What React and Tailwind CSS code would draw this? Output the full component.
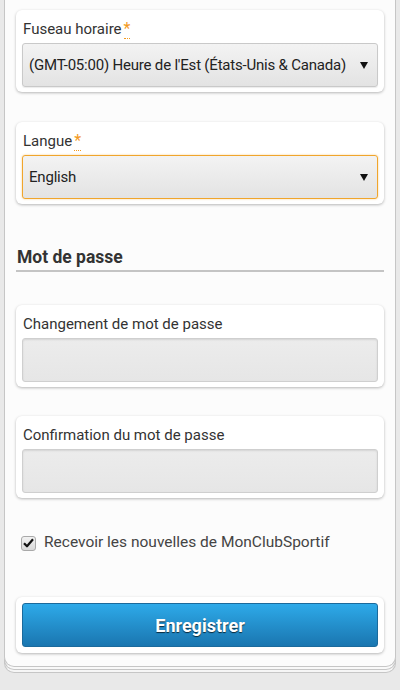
import React from "react";

function Required() {
  return (
    <abbr
      title="requis"
      className="ml-[2px] text-[16px] text-[#f39a1e] no-underline border-b border-dotted border-[#f39a1e] leading-none"
    >
      *
    </abbr>
  );
}

function Caret() {
  return (
    <svg width="8" height="7" viewBox="0 0 8 7" className="shrink-0">
      <path d="M0 0 H8 L4 7 Z" fill="#111" />
    </svg>
  );
}

function Card({ children }) {
  return (
    <div className="rounded-[6px] bg-white px-[6px] pt-[9px] pb-[5px] shadow-[0_1px_3px_rgba(0,0,0,0.28)]">
      {children}
    </div>
  );
}

function FieldLabel({ children, required }) {
  return (
    <div className="pl-px text-[15px] leading-[20px] text-[#333]">
      {children}
      {required && <Required />}
    </div>
  );
}

function SelectBox({ value, focused }) {
  return (
    <div
      className={
        "mt-[4px] flex h-[44px] items-center justify-between rounded-[3px] border bg-gradient-to-b from-[#f3f3f3] to-[#e3e3e3] pl-[6px] pr-[9px] text-[15px] tracking-[-0.2px] text-[#222] " +
        (focused
          ? "border-[#f0a52c] shadow-[0_0_2px_rgba(240,165,44,0.6)]"
          : "border-[#c9c9c9] shadow-[0_1px_1px_rgba(0,0,0,0.08)]")
      }
    >
      <span className="whitespace-nowrap">{value}</span>
      <Caret />
    </div>
  );
}

function TextBox() {
  return (
    <div className="mt-[4px] h-[44px] rounded-[3px] border border-[#cfcfcf] bg-gradient-to-b from-[#ececec] to-[#e6e6e6] shadow-[inset_0_1px_2px_rgba(0,0,0,0.1)]" />
  );
}

export default function App() {
  return (
    <div
      className="min-h-[690px] w-[400px] bg-[#e9e9e9] px-[4px] pb-[20px]"
      style={{ fontFamily: "Roboto, 'Liberation Sans', sans-serif" }}
    >
      <div className="rounded-b-[10px] border-x border-b border-[#c6c6c6] bg-[#fcfcfc] px-[11px] pt-[10px] pb-[13px] shadow-[0_3px_0_-1px_#f9f9f9,0_3px_0_0_#c6c6c6,0_6px_0_-1px_#f6f6f6,0_6px_0_0_#c6c6c6]">
        <Card>
          <FieldLabel required>Fuseau horaire</FieldLabel>
          <SelectBox value="(GMT-05:00) Heure de l'Est (États-Unis & Canada)" />
        </Card>

        <div className="mt-[30px]">
          <Card>
            <FieldLabel required>Langue</FieldLabel>
            <SelectBox value="English" focused />
          </Card>
        </div>

        <h3 className="mt-[41px] border-b-2 border-[#c4c4c4] pl-px pb-[1px] text-[17.5px] font-bold leading-[24px] text-[#333]">
          Mot de passe
        </h3>

        <div className="mt-[33px]">
          <Card>
            <FieldLabel>Changement de mot de passe</FieldLabel>
            <TextBox />
          </Card>
        </div>

        <div className="mt-[29px]">
          <Card>
            <FieldLabel>Confirmation du mot de passe</FieldLabel>
            <TextBox />
          </Card>
        </div>

        <label className="mt-[35px] flex h-[20px] items-center pl-[5px] text-[15.5px] text-[#444]">
          <span className="flex h-[15px] w-[15px] items-center justify-center rounded-[3px] border border-[#a9a9a9] bg-gradient-to-b from-[#f2f2f2] to-[#d9d9d9]">
            <svg width="11" height="10" viewBox="0 0 11 10">
              <path d="M1 5.2 L4 8.3 L10 1.3" fill="none" stroke="#111" strokeWidth="2.2" strokeLinejoin="round" />
            </svg>
          </span>
          <span className="ml-[8px]">Recevoir les nouvelles de MonClubSportif</span>
        </label>

        <div className="mt-[44px] rounded-[6px] bg-white px-[6px] py-[6px] shadow-[0_1px_3px_rgba(0,0,0,0.28)]">
          <button
            type="button"
            className="flex h-[44px] w-full items-center justify-center rounded-[3px] border border-[#1b6a9c] bg-gradient-to-b from-[#2eaae9] to-[#1a76b0] text-[18px] font-bold text-white [text-shadow:0_1px_1px_rgba(0,0,0,0.7)]"
          >
            Enregistrer
          </button>
        </div>
      </div>
    </div>
  );
}
